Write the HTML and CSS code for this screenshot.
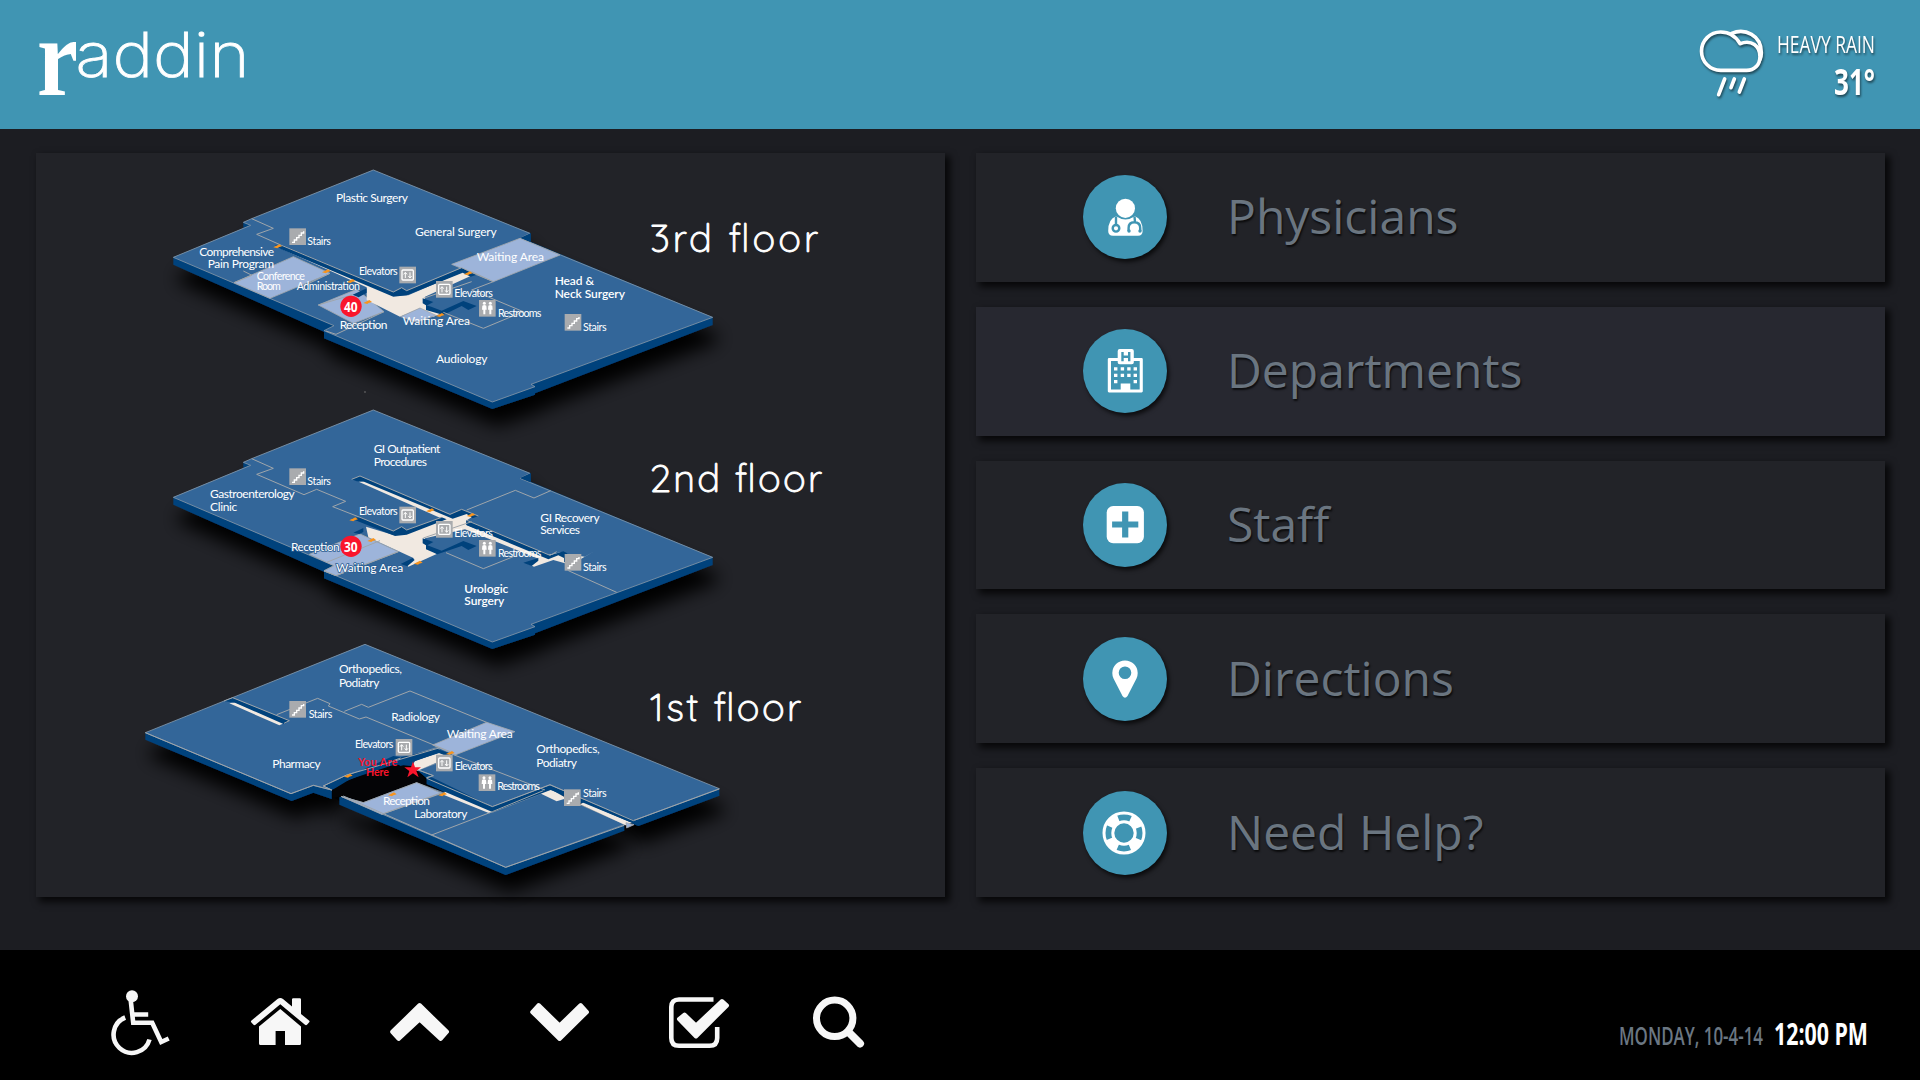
FILE: index.html
```html
<!DOCTYPE html>
<html lang="en">
<head>
<meta charset="utf-8">
<title>raddin</title>
<link rel="stylesheet" href="styles.css">
</head>
<body>
<header class="header">
  <svg class="logo" viewBox="36 20 220 84" role="img" aria-label="raddin">
    <text class="logo-r" x="37" y="94.5" textLength="41" lengthAdjust="spacingAndGlyphs">r</text>
    <text class="logo-rest" x="75.5" y="77" textLength="174" lengthAdjust="spacingAndGlyphs">addin</text>
  </svg>
  <div class="weather">
    <svg class="weather-icon" viewBox="237 84 204 216">
      <path d="M302 211A57 57 0 0 1 302 96C330 96 347 108 360 131C395 118 420 138 420 170C420 195 402 211 380 211Z"/>
      <path d="M335 100C375 84 424 105 424 158C424 166 423 172 420 178"/>
      <path d="M314 237L296 284M343 237L333 263M373 237L358 276"/>
    </svg>
    <svg class="weather-text" viewBox="0 0 100 72">
      <text class="sky" x="1" y="25" textLength="98" lengthAdjust="spacingAndGlyphs">HEAVY RAIN</text>
      <text class="temp" x="58" y="67" textLength="41" lengthAdjust="spacingAndGlyphs">31°</text>
    </svg>
  </div>
</header>

<main class="main">
  <section class="panel map-panel">
    <svg class="map" viewBox="36 153 909 744">
      <defs>
        <filter id="shade" x="-20%" y="-20%" width="140%" height="160%"><feDropShadow dx="14" dy="52" stdDeviation="27" flood-color="#000" flood-opacity="1"/></filter>
        <g id="slab">
          <path class="side" filter="url(#shade)" d="M40 322L250 235V217L275 206L640 60L1112 250V275L1658 502V525L1125 730V734L997 777L492 565V545L40 344Z"/>
          <path class="top" d="M40 322L272 226L250 217L275 206L640 60L1110 250L1080 265L1658 502L1113 703L1125 710L997 756L492 542L522 527Z"/>
          <path class="side" d="M1080 264L1112 250V277Z"/>
        </g>
        <g id="stairs"><rect class="tile" width="50" height="50"/><path class="glyph" d="M8 42H15V35H22V28H29V21H36V14H43V9"/></g>
        <g id="lift"><rect class="tile" width="50" height="50"/><rect class="glyph" x="8" y="10" width="34" height="30" rx="3"/><path class="glyph thin" d="M18 34V18M13 23L18 17L23 23M32 17V33M27 28L32 34L37 28"/></g>
        <g id="wc"><rect class="tile" width="50" height="50"/><g fill="#fff"><circle cx="16" cy="10" r="4.5"/><path d="M10 17Q16 13 22 17L23 29H19V43H13V29H9Z"/><circle cx="34" cy="10" r="4.5"/><path d="M28 17Q34 13 40 17L41 29H37V43H31V29H27Z"/></g></g>
        <path id="door" class="door" d="M0 6L18 -3L26 3L16 6L12 9Z"/>
      </defs>

      <g transform="translate(160 150) scale(.33333)">
        <use href="#slab"/>
        <path class="room" d="M222 398L400 320L510 370L330 445Z"/>
        <path class="room" d="M475 465L590 418L672 485L580 520Z"/>
        <path class="room" d="M875 343L1080 265L1200 315L1000 395Z"/>
        <path class="hall" d="M350 290L372 297L700 438L745 436L920 360L945 372L795 440V462L845 490L820 500L780 475L720 500L620 450V412Z"/>
        <path class="room" d="M722 500L780 474L828 496L770 516Z"/>
        <path class="wall" d="M345 286L365 284L700 427L725 414L740 422L905 354L950 374L932 380L908 368L740 436L700 440L362 297ZM620 415V428L596 442L578 434ZM788 445L820 456L802 466L845 482L910 453L950 468L925 480L905 468L850 495L798 480V466L788 460Z"/>
        <path class="line" d="M275 206L340 235L290 253L360 284L700 426L725 413L740 422L905 353L950 374M250 363L276 376L222 398M510 370L430 408M475 465L578 434M672 485L528 553L498 543M935 420L1000 395L935 365M935 420L1090 485L970 535L850 487M790 445L935 395"/>
        <use href="#door" x="340" y="286"/><use href="#door" x="486" y="361"/><use href="#door" x="560" y="390"/><use href="#door" x="610" y="453"/><use href="#door" x="828" y="492"/><use href="#door" x="912" y="367"/>
        <use href="#stairs" x="388" y="235"/><use href="#stairs" x="1214" y="492"/>
        <use href="#lift" x="718" y="350"/><use href="#lift" x="828" y="393"/><use href="#wc" x="957" y="450"/>
        <circle class="badge" cx="573" cy="469" r="32"/><text class="num" x="552" y="485" textLength="41" lengthAdjust="spacingAndGlyphs">40</text>
        <g class="label">
          <text x="528" y="156" textLength="216">Plastic Surgery</text>
          <text x="765" y="257" textLength="245">General Surgery</text>
          <text x="118" y="317" textLength="224">Comprehensive</text>
          <text x="143" y="354" textLength="199">Pain Program</text>
          <text x="539" y="536" textLength="143">Reception</text>
          <text x="728" y="524" textLength="202">Waiting Area</text>
          <text x="828" y="640" textLength="154">Audiology</text>
          <text x="950" y="333" textLength="202">Waiting Area</text>
          <text class="strong" x="1184" y="405" textLength="118">Head &amp;</text>
          <text class="strong" x="1184" y="443" textLength="211">Neck Surgery</text>
        </g>
        <g class="label small">
          <text x="290" y="390" textLength="145">Conference</text>
          <text x="290" y="420" textLength="72">Room</text>
          <text x="410" y="419" textLength="190">Administration</text>
          <text x="442" y="285" textLength="71">Stairs</text>
          <text x="597" y="375" textLength="116">Elevators</text>
          <text x="883" y="440" textLength="116">Elevators</text>
          <text x="1014" y="500" textLength="130">Restrooms</text>
          <text x="1269" y="542" textLength="71">Stairs</text>
        </g>
        <circle cx="615" cy="726" r="2.5" fill="#777"/>
      </g>

      <g transform="translate(160 400) scale(.33333)">
        <use href="#slab" y="-30"/>
        <path class="room" d="M448 463L600 402L715 455L528 527L492 513L522 497Z"/>
        <path class="hall" d="M596 245L612 242L880 350L925 335L945 345L918 362V374L1150 468L1205 456L1235 465L1275 470L1300 455L1215 505V490L1180 480L1122 500L1105 492L1135 476L915 388L795 415V432L830 462L745 500L735 490L762 475L625 412L618 380L700 405L850 358Z"/>
        <path class="wall" d="M575 238L600 228L870 344L905 328L955 348L938 355L920 342L878 356L612 245L590 244ZM575 355L600 352L700 394L725 380L740 390L845 352L860 358L740 404L705 408L590 362ZM580 398L610 384V396L598 402ZM722 492L758 474L764 480L742 499ZM788 415L820 426L802 436L845 452L910 423L950 438L925 450L905 438L832 463L798 448V436L788 430ZM920 361L1170 466L1210 454L1238 468L1234 500L1212 485V474L1195 466L1165 478L920 376ZM1090 488L1135 474V482L1115 498Z"/>
        <path class="line" d="M275 176L340 205L290 223L432 284L470 268L557 304L518 320L600 352L700 393L725 380L740 390L845 352M575 238L600 228L870 343L905 328L955 348M500 487L660 422M715 455L528 527L492 513M920 330L1066 271L1122 294L1172 272M858 458L970 506L1060 470M1225 512L1370 577M790 414L935 365M920 361L1170 466L1190 455"/>
        <use href="#door" x="568" y="355"/><use href="#door" x="622" y="417"/><use href="#door" x="798" y="328"/><use href="#door" x="762" y="485"/><use href="#door" x="920" y="342"/>
        <use href="#stairs" x="388" y="205"/><use href="#stairs" x="1214" y="462"/>
        <use href="#lift" x="718" y="320"/><use href="#lift" x="828" y="363"/><use href="#wc" x="957" y="420"/>
        <circle class="badge" cx="573" cy="439" r="32"/><text class="num" x="552" y="456" textLength="41" lengthAdjust="spacingAndGlyphs">30</text>
        <g class="label">
          <text x="641" y="158" textLength="200">GI Outpatient</text>
          <text x="641" y="199" textLength="160">Procedures</text>
          <text x="150" y="293" textLength="254">Gastroenterology</text>
          <text x="150" y="334" textLength="82">Clinic</text>
          <text class="edged" x="393" y="453" textLength="146">Reception</text>
          <text class="edged" x="528" y="516" textLength="202">Waiting Area</text>
          <text x="1141" y="365" textLength="178">GI Recovery</text>
          <text x="1141" y="402" textLength="119">Services</text>
          <text class="strong" x="913" y="580" textLength="132">Urologic</text>
          <text class="strong" x="913" y="615" textLength="120">Surgery</text>
        </g>
        <g class="label small">
          <text x="442" y="255" textLength="71">Stairs</text>
          <text x="597" y="345" textLength="116">Elevators</text>
          <text x="883" y="411" textLength="116">Elevators</text>
          <text x="1014" y="470" textLength="130">Restrooms</text>
          <text x="1269" y="512" textLength="71">Stairs</text>
        </g>
      </g>

      <g transform="translate(130 630) scale(.33333)">
        <path class="void" d="M590 490L900 380L960 480L860 475L640 520Z"/>
        <path class="side" filter="url(#shade)" d="M46 308L705 43L1768 476V497L1525 588L1260 482L1087 552L890 463V445L850 410L800 403L605 480V507L550 488L485 513L46 329Z"/>
        <path class="side" filter="url(#shade)" d="M628 502L640 498L700 518L860 465L1087 548L1260 485L1483 585V602L1127 735L628 524Z"/>
        <path class="top" d="M46 308L705 43L1768 476L1510 572L1260 465L1087 530L890 443L910 437L865 420L960 385L920 353L650 435L580 468L605 480L550 466L483 491Z"/>
        <path class="void" d="M607 480L660 448L790 405L845 408L890 450V462L945 487L860 456L700 518L640 497L607 505Z"/>
        <path class="top" d="M635 500L700 518L860 458L945 490L1087 547L1255 482L1485 583L1127 712Z"/>
        <path class="room" d="M633 499L700 518L860 458L935 490L755 553Z"/>
        <path class="room" d="M908 345L1070 277L1155 305L975 375Z"/>
        <path class="hall" d="M846 410L855 392L930 368L958 382L862 422ZM298 220L315 217L462 280L448 286ZM945 484L960 486L1090 543L1078 550L940 494ZM1230 490L1262 478L1310 505L1280 514ZM1350 523L1362 517L1505 578L1487 586Z"/>
        <path class="room" d="M1488 578L1512 584L1490 594Z"/>
        <path class="wall" d="M282 213L308 204L478 272L462 283L315 218ZM650 440L790 378L812 382L920 356L965 372L955 380L925 368L848 396L812 408L790 396L650 453ZM890 446L905 442L1087 530L1260 467L1525 576L1500 576L1340 510L1262 480L1087 546L890 462Z"/>
        <path class="line" d="M282 213L308 203L478 272L462 280M440 254L563 205L600 221L595 228L688 267L708 261L960 365M643 244L695 223L715 232L840 183L1070 277M930 353L650 435L580 468L605 480L550 466L483 491L46 308M790 392L812 384M890 443L910 437L865 420M965 372L1245 480M890 445L1087 530L1260 464L1510 572L1768 477M755 553L935 488M640 498L1127 712L1483 586M905 615L1087 545L1240 482"/>
        <use href="#door" x="642" y="434"/><use href="#door" x="774" y="490"/><use href="#door" x="925" y="490"/><use href="#door" x="948" y="366"/>
        <path class="star" d="M849 394L855 412H873L859 423L866 442L849 430L832 442L838 423L823 412H843Z"/>
        <use href="#stairs" x="478" y="213"/><use href="#stairs" x="1302" y="478"/>
        <use href="#lift" x="797" y="327"/><use href="#lift" x="918" y="374"/><use href="#wc" x="1046" y="433"/>
        <g class="label">
          <text x="627" y="130" textLength="189">Orthopedics,</text>
          <text x="627" y="171" textLength="121">Podiatry</text>
          <text x="784" y="274" textLength="146">Radiology</text>
          <text x="427" y="414" textLength="145">Pharmacy</text>
          <text x="759" y="525" textLength="141">Reception</text>
          <text x="853" y="565" textLength="159">Laboratory</text>
          <text x="950" y="325" textLength="198">Waiting Area</text>
          <text x="1219" y="370" textLength="190">Orthopedics,</text>
          <text x="1219" y="411" textLength="122">Podiatry</text>
          <text class="here" x="685" y="408" textLength="117">You Are</text>
          <text class="here" x="708" y="438" textLength="69">Here</text>
        </g>
        <g class="label small">
          <text x="536" y="263" textLength="71">Stairs</text>
          <text x="675" y="353" textLength="115">Elevators</text>
          <text x="974" y="421" textLength="114">Elevators</text>
          <text x="1102" y="480" textLength="128">Restrooms</text>
          <text x="1359" y="500" textLength="71">Stairs</text>
        </g>
      </g>

      <g class="floor-name">
        <text x="650" y="252" textLength="168">3rd floor</text>
        <text x="650" y="492" textLength="172">2nd floor</text>
        <text x="650" y="721" textLength="151">1st floor</text>
      </g>
    </svg>
  </section>

  <nav class="menu">
    <a class="panel item">
      <svg class="disc" viewBox="0 0 84 84"><circle cx="42.4" cy="33.3" r="9.6"/><path d="M33 41.3Q42.4 47.5 52 41.3Q59.6 44 59.6 56Q59.6 60.8 55 60.8H30Q25.2 60.8 25.2 56Q25.2 44 33 41.3Z"/><g class="cut"><path d="M33 41.5V50M51.5 41.5L52 47M45.6 56V53Q45.6 47.3 51.3 47.3Q57.2 47.3 57.2 53V56"/><circle cx="33" cy="53.3" r="3.3"/><circle class="dot" cx="46" cy="56" r="1.7"/><circle class="dot" cx="57" cy="56" r="1.7"/></g></svg>
      <span>Physicians</span>
    </a>
    <a class="panel item active">
      <svg class="disc" viewBox="0 0 84 84"><path fill-rule="evenodd" d="M26 29H34.7V22Q34.7 20 36.7 20H48.8Q50.8 20 50.8 22V29H58.6Q59.8 29 59.8 30.2V62.3Q59.8 63.4 58.6 63.4H26Q24.8 63.4 24.8 62.3V30.2Q24.8 29 26 29ZM28 32V60.4H37.7V54.4H47.3V60.4H56.7V32H50.8V33.5Q50.8 35.3 48.8 35.3H36.7Q34.7 35.3 34.7 33.5V32Z"/><path class="cut" d="M39.5 23V32.3M46.2 23V32.3M39.5 27.7H46.2"/><path d="M31 38.3h3.4v3.2h-3.4zM37.7 38.3h3.4v3.2h-3.4zM44.2 38.3h3.4v3.2h-3.4zM50.6 38.3h3.4v3.2h-3.4zM31 44.7h3.4v3.2h-3.4zM37.7 44.7h3.4v3.2h-3.4zM44.2 44.7h3.4v3.2h-3.4zM50.6 44.7h3.4v3.2h-3.4zM31 51h3.4v3.2h-3.4zM50.6 51h3.4v3.2h-3.4z"/></svg>
      <span>Departments</span>
    </a>
    <a class="panel item">
      <svg class="disc" viewBox="0 0 84 84"><rect x="23.7" y="23" width="37.2" height="37.2" rx="6.5"/><path class="cut plus" d="M42.2 31.5V51.5M32.2 41.5H52.2"/></svg>
      <span>Staff</span>
    </a>
    <a class="panel item">
      <svg class="disc" viewBox="0 0 84 84"><path fill-rule="evenodd" d="M42 23.4A12.7 12.7 0 0 1 54.7 36Q54.7 39 53.5 41.5L44.5 59Q42 62.5 39.5 59L30.5 41.5Q29.3 39 29.3 36A12.7 12.7 0 0 1 42 23.4ZM42 29.5A6.3 6.3 0 1 0 42 42.1A6.3 6.3 0 1 0 42 29.5Z"/></svg>
      <span>Directions</span>
    </a>
    <a class="panel item">
      <svg class="disc" viewBox="0 0 84 84"><g class="ring"><circle cx="41" cy="42" r="20"/><circle cx="41" cy="42" r="11.2"/><circle class="wedges" cx="41" cy="42" r="15.5"/></g></svg>
      <span>Need Help?</span>
    </a>
  </nav>
</main>

<footer class="footer">
  <div class="tools">
    <svg viewBox="-.7 0 60 66"><circle cx="21.3" cy="6.2" r="6"/><path class="pen" d="M20 10L22.5 32.8H41.5L50.5 52L58 48.5M22 24.5H37.5"/><path class="pen" d="M14.5 27.5A18.3 18.3 0 1 0 38.8 49.5"/></svg>
    <svg viewBox="0 0 60 66"><path d="M30.3 19L51 36.5V53.5Q51 55 49.5 55H35V41H25.6V55H10.5Q9 55 9 53.5V36.5Z"/><path d="M27.5 9Q30.3 7 33 9L42 16.5V9.5Q42 8.3 43.2 8.3H49.8Q51 8.3 51 9.5V24L59 30.5Q60 31.3 59.2 32.3L57 34.8Q56 35.6 55 34.8L30.3 14.3L5.5 34.8Q4.5 35.6 3.5 34.8L1.2 32.3Q.5 31.3 1.5 30.5Z"/></svg>
    <svg viewBox="0 0 60 66"><path class="soft" d="M29.6 15L57 41.8L50.7 49L29.6 29.5L8.6 49L2.2 41.8Z"/></svg>
    <svg viewBox="0 0 60 66"><path class="soft" d="M29.6 49L57 22L50.7 15L29.6 35.5L8.6 15L2.2 22Z"/></svg>
    <svg viewBox="1 0 60 66"><path class="pen" d="M44.5 9.5H10Q2.3 9.5 2.3 17V48Q2.3 55.8 10 55.8H40.5Q48.2 55.8 48.2 48V37"/><path class="soft" d="M10 29L15.5 24.5L27 35.5L53 11L58 15.5L27 46.5Z"/></svg>
    <svg viewBox="0 0 60 66"><circle class="pen lens" cx="24.7" cy="28.3" r="18.2"/><path class="pen handle" d="M39 42.5L50 53.5"/></svg>
  </div>
  <svg class="clock" viewBox="0 0 250 40">
    <text class="date" x="1" y="30" textLength="144" lengthAdjust="spacingAndGlyphs">MONDAY, 10-4-14</text>
    <text class="time" x="156" y="30" textLength="94" lengthAdjust="spacingAndGlyphs">12:00 PM</text>
  </svg>
</footer>
</body>
</html>
```
FILE: styles.css
```css
* { box-sizing: border-box; }
body {
  margin: 0;
  width: 1920px;
  height: 1080px;
  overflow: hidden;
  display: flex;
  flex-direction: column;
  background: #1c1d22;
  font-family: "Open Sans", sans-serif;
}
svg { display: block; overflow: visible; }

.header {
  height: 129px;
  flex: none;
  display: flex;
  justify-content: space-between;
  align-items: flex-start;
  padding: 20px 44px 0 36px;
  background: #4095b3;
}
.logo { width: 220px; height: 84px; fill: #fff; }
.logo-r { font: bold 112px "Liberation Serif", serif; }
.logo-rest { font: 200 61.5px Inter, sans-serif; stroke: #fff; stroke-width: .8px; }
.weather {
  display: flex;
  gap: 9px;
  padding-top: 8px;
  filter: drop-shadow(1px 2px 1px rgba(0, 0, 0, .5));
}
.weather-icon { width: 68px; height: 72px; fill: none; stroke: #fff; stroke-width: 11; stroke-linecap: round; stroke-linejoin: round; }
.weather-text { width: 100px; height: 72px; fill: #fff; }
.sky { font-size: 24.5px; }
.temp { font-size: 36px; font-weight: 700; }

.main {
  flex: none;
  height: 821px;
  padding: 24px 35px 53px 36px;
  display: grid;
  grid-template-columns: 909px 909px;
  column-gap: 31px;
}
.panel { background: #222328; box-shadow: 4px 4px 7px 1px rgba(0, 0, 0, .75); }
.map { width: 909px; height: 744px; }
.side, .wall { fill: #00427c; }
.top { fill: #336699; stroke: #8698a8; stroke-width: 2.5; }
.room { fill: #9db4da; stroke: #a3a8ad; stroke-width: 2.5; }
.hall { fill: #f1e9e1; }
.void { fill: #040406; }
.line { fill: none; stroke: #a0a6ab; stroke-width: 3; }
.door { fill: #f7941e; }
.tile { fill: #a9abae; }
.glyph { fill: none; stroke: #fff; stroke-width: 4; }
.thin { stroke-width: 3; }
.badge, .star { fill: #f9152c; }
.num { font-size: 42px; font-weight: 700; fill: #fff; }
.label { font: 36px Lato, sans-serif; fill: #fff; }
.small { font-size: 32px; }
.strong { font-weight: 600; }
.edged { stroke: #2b5d92; stroke-width: 5px; paint-order: stroke; }
.here { fill: #f9152c; font-size: 32px; font-weight: 700; }
.floor-name { font: 300 38px Quicksand, Comfortaa, Lato, sans-serif; fill: #fff; stroke: #fff; stroke-width: 1px; stroke-linejoin: round; }

.menu { display: flex; flex-direction: column; gap: 25px; }
.item {
  flex: 1;
  display: flex;
  align-items: center;
  gap: 60px;
  padding: 0 0 0 107px;
  font-size: 48px;
  line-height: 64px;
  color: #6a7580;
  text-shadow: 1px 2px 2px rgba(0, 0, 0, .7);
}
.item span { padding-bottom: 2px; }
.active { background: #272830; }
.disc {
  width: 84px;
  height: 84px;
  border-radius: 50%;
  background: #4095b3;
  fill: #fff;
  box-shadow: 2px 3px 4px rgba(0, 0, 0, .7);
}
.cut { fill: none; stroke: #4095b3; stroke-width: 2.4; }
.dot { fill: #4095b3; stroke: none; }
.plus { stroke-width: 6.2; stroke-linecap: square; }
.ring { fill: none; stroke: #fff; stroke-width: 3; }
.wedges { stroke-width: 9; stroke-dasharray: 12 12.35; stroke-dashoffset: -6.17; }

.footer {
  flex: none;
  height: 130px;
  padding: 40px 52px 0 110px;
  display: flex;
  justify-content: space-between;
  align-items: flex-start;
  background: #000;
}
.tools { display: flex; gap: 80px; fill: #f7f7f7; }
.tools svg { width: 60px; height: 66px; }
.pen { fill: none; stroke: #f7f7f7; stroke-width: 4.6; }
.soft { stroke: #f7f7f7; stroke-width: 4; stroke-linejoin: round; }
.lens { stroke-width: 7; }
.handle { stroke-width: 8; stroke-linecap: round; }
.clock { width: 250px; height: 40px; margin-top: 25px; }
.date { font-size: 24.5px; font-weight: 600; fill: #6b7783; }
.time { font-size: 30px; font-weight: 700; fill: #fff; }
```
